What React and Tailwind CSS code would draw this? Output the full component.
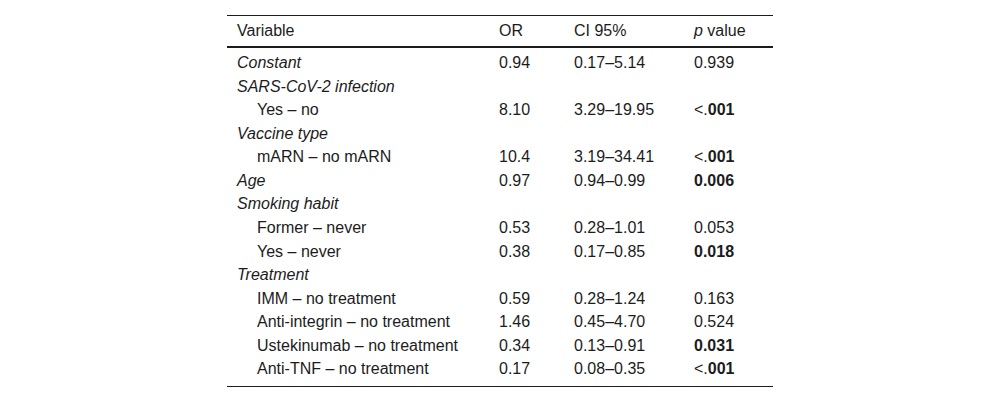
export default function App() {
  const rows = [
    { v: "Constant", h: true, or: "0.94", ci: "0.17–5.14", p: "0.939" },
    { v: "SARS-CoV-2 infection", h: true },
    { v: "Yes – no", or: "8.10", ci: "3.29–19.95", p: <>&lt;.<b>001</b></> },
    { v: "Vaccine type", h: true },
    { v: "mARN – no mARN", or: "10.4", ci: "3.19–34.41", p: <>&lt;.<b>001</b></> },
    { v: "Age", h: true, or: "0.97", ci: "0.94–0.99", p: <b>0.006</b> },
    { v: "Smoking habit", h: true },
    { v: "Former – never", or: "0.53", ci: "0.28–1.01", p: "0.053" },
    { v: "Yes – never", or: "0.38", ci: "0.17–0.85", p: <b>0.018</b> },
    { v: "Treatment", h: true },
    { v: "IMM – no treatment", or: "0.59", ci: "0.28–1.24", p: "0.163" },
    { v: "Anti-integrin – no treatment", or: "1.46", ci: "0.45–4.70", p: "0.524" },
    { v: "Ustekinumab – no treatment", or: "0.34", ci: "0.13–0.91", p: <b>0.031</b> },
    { v: "Anti-TNF – no treatment", or: "0.17", ci: "0.08–0.35", p: <>&lt;.<b>001</b></> },
  ];
  const cols = "grid grid-cols-[262px_75px_120px_89px]";
  return (
    <div className="w-[1000px] h-[402px] bg-white pt-[15px] flex justify-center text-[16px] text-[#1c1c1c]" style={{ fontFamily: '"Liberation Sans", Arial, sans-serif' }}>
      <div className="w-[546px] h-[372px] border-t border-b border-[#1c1c1c] flex flex-col">
        <div className={`${cols} h-[32px] items-center border-b-2 border-[#1c1c1c]`}>
          <div className="pl-[10px]">Variable</div>
          <div className="pl-[10px]">OR</div>
          <div className="pl-[10px]">CI 95%</div>
          <div className="pl-[10px]"><i>p</i> value</div>
        </div>
        <div className="flex flex-col pt-[3.5px]">
          {rows.map((r, i) => (
            <div key={i} className={`${cols} h-[23.54px] items-center leading-none`}>
              <div className={r.h ? "pl-[10px] italic" : "pl-[30px]"}>{r.v}</div>
              <div className="pl-[10px]">{r.or}</div>
              <div className="pl-[10px]">{r.ci}</div>
              <div className="pl-[10px]">{r.p}</div>
            </div>
          ))}
        </div>
      </div>
    </div>
  );
}
